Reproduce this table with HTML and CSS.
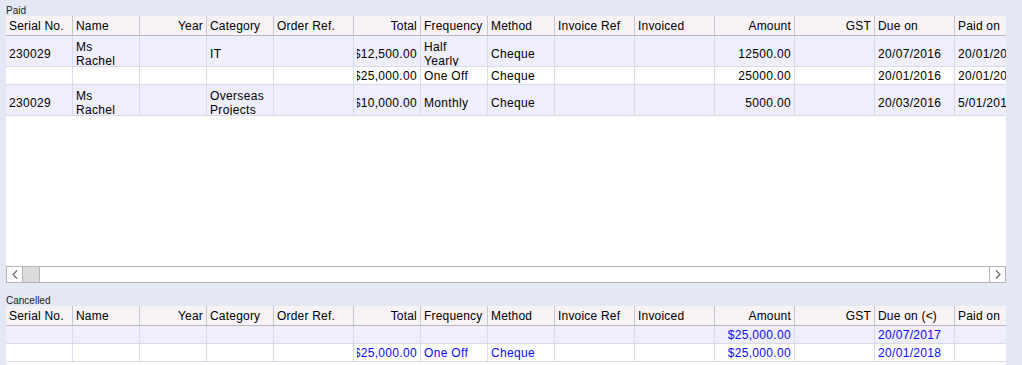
FILE: index.html
```html
<!DOCTYPE html>
<html>
<head>
<meta charset="utf-8">
<link rel="stylesheet" href="styles.css">
</head>
<body>
<section class="section">
  <div class="label">Paid</div>
  <div class="grid grid1">
    <div class="row head">
      <div class="c"><div class="v">Serial No.</div></div>
      <div class="c"><div class="v">Name</div></div>
      <div class="c"><div class="v r">Year</div></div>
      <div class="c"><div class="v">Category</div></div>
      <div class="c"><div class="v">Order Ref.</div></div>
      <div class="c"><div class="v r">Total</div></div>
      <div class="c"><div class="v">Frequency</div></div>
      <div class="c"><div class="v">Method</div></div>
      <div class="c"><div class="v">Invoice Ref</div></div>
      <div class="c"><div class="v">Invoiced</div></div>
      <div class="c"><div class="v r">Amount</div></div>
      <div class="c"><div class="v r">GST</div></div>
      <div class="c"><div class="v">Due on</div></div>
      <div class="c"><div class="v">Paid on</div></div>
    </div>
    <div class="row tall lav">
      <div class="c"><div class="v">230029</div></div>
      <div class="c"><div class="v">Ms<br>Rachel</div></div>
      <div class="c"><div class="v r"></div></div>
      <div class="c"><div class="v">IT</div></div>
      <div class="c"><div class="v"></div></div>
      <div class="c"><div class="v r">$12,500.00</div></div>
      <div class="c"><div class="v">Half<br>Yearly</div></div>
      <div class="c"><div class="v">Cheque</div></div>
      <div class="c"><div class="v"></div></div>
      <div class="c"><div class="v"></div></div>
      <div class="c"><div class="v r">12500.00</div></div>
      <div class="c"><div class="v r"></div></div>
      <div class="c"><div class="v">20/07/2016</div></div>
      <div class="c"><div class="v">20/01/2016</div></div>
    </div>
    <div class="row short wht">
      <div class="c"><div class="v"></div></div>
      <div class="c"><div class="v"></div></div>
      <div class="c"><div class="v r"></div></div>
      <div class="c"><div class="v"></div></div>
      <div class="c"><div class="v"></div></div>
      <div class="c"><div class="v r">$25,000.00</div></div>
      <div class="c"><div class="v">One Off</div></div>
      <div class="c"><div class="v">Cheque</div></div>
      <div class="c"><div class="v"></div></div>
      <div class="c"><div class="v"></div></div>
      <div class="c"><div class="v r">25000.00</div></div>
      <div class="c"><div class="v r"></div></div>
      <div class="c"><div class="v">20/01/2016</div></div>
      <div class="c"><div class="v">20/01/2016</div></div>
    </div>
    <div class="row tall lav">
      <div class="c"><div class="v">230029</div></div>
      <div class="c"><div class="v">Ms<br>Rachel</div></div>
      <div class="c"><div class="v r"></div></div>
      <div class="c"><div class="v">Overseas<br>Projects</div></div>
      <div class="c"><div class="v"></div></div>
      <div class="c"><div class="v r">$10,000.00</div></div>
      <div class="c"><div class="v">Monthly</div></div>
      <div class="c"><div class="v">Cheque</div></div>
      <div class="c"><div class="v"></div></div>
      <div class="c"><div class="v"></div></div>
      <div class="c"><div class="v r">5000.00</div></div>
      <div class="c"><div class="v r"></div></div>
      <div class="c"><div class="v">20/03/2016</div></div>
      <div class="c"><div class="v">5/01/2016</div></div>
    </div>
    <div class="fill"></div>
    <div class="hscroll">
      <div class="sbtn">
        <svg width="6" height="9" viewBox="0 0 6 9"><polyline points="5,0.5 1,4.5 5,8.5" fill="none" stroke="#6a6a6a" stroke-width="1.2"/></svg>
      </div>
      <div class="thumb"></div>
      <div class="track"></div>
      <div class="sbtn right">
        <svg width="6" height="9" viewBox="0 0 6 9"><polyline points="1,0.5 5,4.5 1,8.5" fill="none" stroke="#6a6a6a" stroke-width="1.2"/></svg>
      </div>
    </div>
  </div>
</section>

<section class="section second">
  <div class="label">Cancelled</div>
  <div class="grid grid2">
    <div class="row head">
      <div class="c"><div class="v">Serial No.</div></div>
      <div class="c"><div class="v">Name</div></div>
      <div class="c"><div class="v r">Year</div></div>
      <div class="c"><div class="v">Category</div></div>
      <div class="c"><div class="v">Order Ref.</div></div>
      <div class="c"><div class="v r">Total</div></div>
      <div class="c"><div class="v">Frequency</div></div>
      <div class="c"><div class="v">Method</div></div>
      <div class="c"><div class="v">Invoice Ref</div></div>
      <div class="c"><div class="v">Invoiced</div></div>
      <div class="c"><div class="v r">Amount</div></div>
      <div class="c"><div class="v r">GST</div></div>
      <div class="c"><div class="v">Due on (&lt;)</div></div>
      <div class="c"><div class="v">Paid on</div></div>
    </div>
    <div class="row short lav blue">
      <div class="c"><div class="v"></div></div>
      <div class="c"><div class="v"></div></div>
      <div class="c"><div class="v r"></div></div>
      <div class="c"><div class="v"></div></div>
      <div class="c"><div class="v"></div></div>
      <div class="c"><div class="v r"></div></div>
      <div class="c"><div class="v"></div></div>
      <div class="c"><div class="v"></div></div>
      <div class="c"><div class="v"></div></div>
      <div class="c"><div class="v"></div></div>
      <div class="c"><div class="v r">$25,000.00</div></div>
      <div class="c"><div class="v r"></div></div>
      <div class="c"><div class="v">20/07/2017</div></div>
      <div class="c"><div class="v"></div></div>
    </div>
    <div class="row short wht blue">
      <div class="c"><div class="v"></div></div>
      <div class="c"><div class="v"></div></div>
      <div class="c"><div class="v r"></div></div>
      <div class="c"><div class="v"></div></div>
      <div class="c"><div class="v"></div></div>
      <div class="c"><div class="v r">$25,000.00</div></div>
      <div class="c"><div class="v">One Off</div></div>
      <div class="c"><div class="v">Cheque</div></div>
      <div class="c"><div class="v"></div></div>
      <div class="c"><div class="v"></div></div>
      <div class="c"><div class="v r">$25,000.00</div></div>
      <div class="c"><div class="v r"></div></div>
      <div class="c"><div class="v">20/01/2018</div></div>
      <div class="c"><div class="v"></div></div>
    </div>
    <div class="fill"></div>
  </div>
</section>
</body>
</html>
```

FILE: styles.css
```css
* { box-sizing: border-box; }

html, body {
  margin: 0;
  padding: 0;
}

body {
  background: #e4e8f5;
  padding-left: 6px;
  width: 1022px;
  height: 365px;
  overflow: hidden;
  font-family: "Liberation Sans", Arial, sans-serif;
  font-size: 12px;
  color: #000;
}

.section.second {
  margin-top: 7px;
}

.label {
  font-size: 10px;
  line-height: 10px;
  padding-top: 6px;
  color: #222;
}

.grid {
  width: 1000px;
  background: #fff;
  overflow: hidden;
  display: flex;
  flex-direction: column;
}

.grid1 {
  height: 267px;
}

.grid2 {
  height: 70px;
}

.row {
  display: grid;
  grid-template-columns: 67px 67px 67px 67px 80px 67px 67px 67px 80px 80px 80px 80px 80px 80px;
  flex: none;
}

.c {
  display: flex;
  align-items: center;
  padding: 0 3px;
  overflow: hidden;
  border-right: 1px solid #dadaee;
  border-bottom: 1px solid #dadaee;
  min-width: 0;
}

.v {
  flex: 1;
  min-width: 0;
  overflow: hidden;
  display: flex;
  flex-direction: column;
  align-items: flex-start;
  white-space: nowrap;
  line-height: 14px;
  letter-spacing: 0.33px;
}

.v.r {
  align-items: flex-end;
}

.head .c {
  height: 20px;
  background: #f6f2f6;
  border-right: 1px solid #c9c5cc;
  border-bottom: 1px solid #bdb9c0;
  padding-top: 2px;
}

.head .v {
  line-height: 17px;
  letter-spacing: 0.2px;
}

.tall .c {
  height: 31px;
  padding-top: 6px;
}

.short .c {
  height: 18px;
  padding-top: 1px;
}

.lav .c { background: #eeeefd; }
.wht .c { background: #fff; }

.blue .v { color: #0a0aff; }

.fill {
  flex: 1;
  min-height: 0;
}

.hscroll {
  height: 17px;
  border: 1px solid #b4b4b4;
  display: flex;
  background: #fff;
  flex: none;
}

.sbtn {
  width: 16px;
  display: flex;
  align-items: center;
  justify-content: center;
  border-right: 1px solid #b4b4b4;
  background: #fff;
}

.sbtn.right {
  border-right: none;
  border-left: 1px solid #b4b4b4;
}

.thumb {
  width: 17px;
  background: #dcdcdc;
  border-right: 1px solid #b4b4b4;
}

.track {
  flex: 1;
}
```
